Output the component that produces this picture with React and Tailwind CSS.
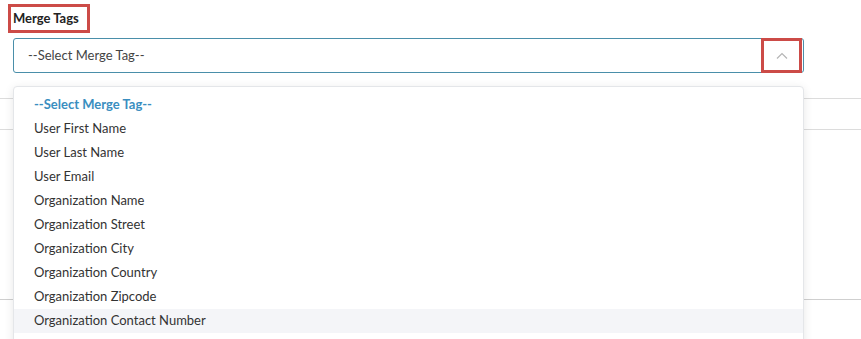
import React from 'react'

const tags = [
  'User First Name',
  'User Last Name',
  'User Email',
  'Organization Name',
  'Organization Street',
  'Organization City',
  'Organization Country',
  'Organization Zipcode',
  'Organization Contact Number',
]

const ChevronUp = () => (
  <svg width="12" height="8" viewBox="0 0 12 8" fill="none" className="text-[#b5b5b5]">
    <path d="M1 6.5 L6 1.5 L11 6.5" stroke="currentColor" strokeWidth="1.2" />
  </svg>
)

export default function App() {
  return (
    <div className="relative w-[861px] h-[339px] overflow-hidden bg-white font-['Lato','Open_Sans',sans-serif] text-[13px] text-[#333] flex flex-col">
      {/* label */}
      <div className="pl-[8px] pt-[4px]">
        <div className="inline-flex items-center h-[29px] pl-[2px] pr-[8px] border-[3px] border-[#cc4b47]">
          <span className="font-bold text-[#222]">Merge Tags</span>
        </div>
      </div>

      {/* select */}
      <div className="relative ml-[13px] mt-[5px] w-[791px] h-[35px] flex items-center border border-[#4a8faa] rounded-[3px] bg-white">
        <span className="pl-[14px] text-[#444]">--Select Merge Tag--</span>
        <div className="absolute right-[1px] top-[-1px] w-[41px] h-[35px] border-[3px] border-[#cc4b47] flex items-center justify-center">
          <ChevronUp />
        </div>
      </div>

      {/* form underneath the open menu */}
      <div className="h-[26px] border-b border-[#dcdcdc]" />
      <div className="h-[31px] border-b border-[#dcdcdc]" />
      <div className="h-[170px] border-b border-[#cfcfcf]" />

      {/* dropdown menu */}
      <div className="absolute left-[13px] top-[86px] w-[791px] h-[280px] bg-white border border-[#e4e6e9] rounded-[4px] shadow-[0_2px_10px_rgba(0,0,0,0.10)] pt-[6px]">
        <div className="h-[24px] flex items-center pl-[20px] font-bold text-[#3a8ec0]">--Select Merge Tag--</div>
        {tags.map((t, i) => (
          <div
            key={t}
            className={`h-[24px] flex items-center pl-[20px] ${i === tags.length - 1 ? 'bg-[#f4f5f8]' : ''}`}
          >
            {t}
          </div>
        ))}
      </div>
    </div>
  )
}
